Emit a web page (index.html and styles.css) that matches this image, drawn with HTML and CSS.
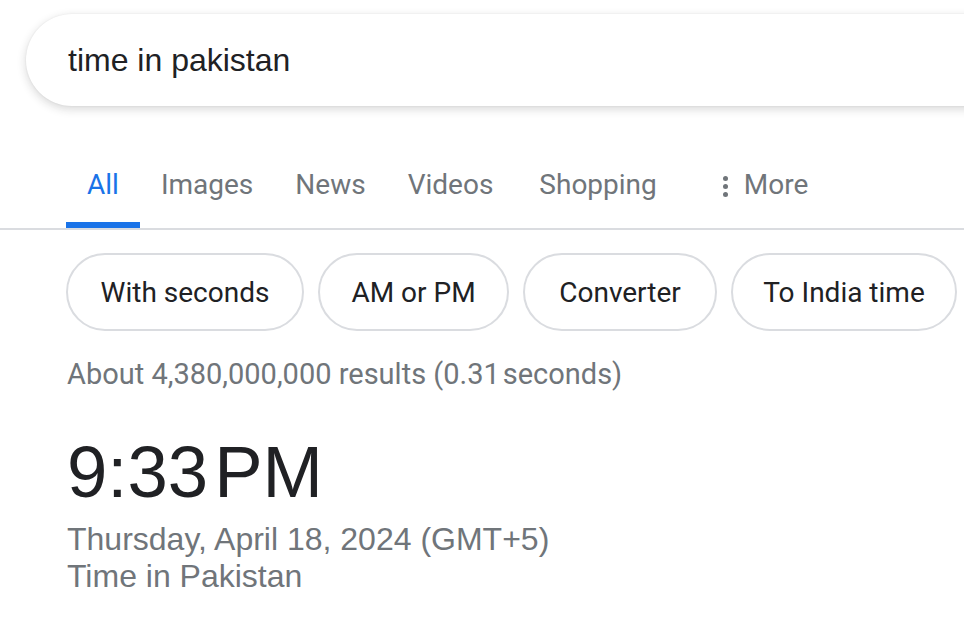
FILE: index.html
```html
<!DOCTYPE html>
<html>
<head>
<meta charset="utf-8">
<link rel="stylesheet" href="styles.css">
</head>
<body>
<div class="page">
  <div class="search-wrap">
    <div class="search">time in pakistan</div>
  </div>
  <nav class="tabs">
    <div class="tab active">All</div>
    <div class="tab">Images</div>
    <div class="tab">News</div>
    <div class="tab">Videos</div>
    <div class="tab shop">Shopping</div>
    <div class="tab more"><span class="dots"><i></i><i></i><i></i></span>More</div>
  </nav>
  <div class="chips">
    <div class="chip c1">With seconds</div>
    <div class="chip c2">AM or PM</div>
    <div class="chip c3">Converter</div>
    <div class="chip c4">To India time</div>
  </div>
  <div class="stats">About 4,380,000,000 results (0.31&#8202;seconds)</div>
  <div class="clock">
    <div class="time">9:33&#8202;PM</div>
    <div class="date">Thursday, April 18, 2024 (GMT+5)</div>
    <div class="place">Time in Pakistan</div>
  </div>
</div>
</body>
</html>
```
FILE: styles.css
```css
html, body {
  margin: 0;
  padding: 0;
  background: #fff;
  overflow: hidden;
}
.page {
  width: 964px;
  height: 620px;
  overflow: hidden;
  font-family: "Liberation Sans", Arial, sans-serif;
  color: #202124;
}
.search-wrap {
  padding: 14px 0 0 26px;
}
.search {
  height: 92px;
  width: 1000px;
  border-radius: 46px;
  background: #fff;
  box-shadow: 0 3px 10px rgba(32, 33, 36, 0.18), 0 0 2px rgba(32,33,36,0.08);
  box-sizing: border-box;
  padding-left: 42px;
  display: flex;
  align-items: center;
  font-size: 32px;
  color: #202124;
}
.tabs {
  margin-top: 54px;
  display: flex;
  height: 68px;
  border-bottom: 2px solid #dadce0;
  padding-left: 66px;
  font-family: Roboto, "Open Sans", sans-serif;
  font-size: 28px;
  color: #70757a;
}
.tab {
  position: relative;
  padding: 0 21px;
  line-height: 50px;
}
.tab.active {
  color: #1a73e8;
}
.tab.active::after {
  content: "";
  position: absolute;
  left: 0;
  right: 0;
  bottom: 0;
  height: 6px;
  background: #1a73e8;
}
.tab.shop {
  margin-left: 4px;
}
.tab.more {
  margin-left: 24px;
  display: flex;
  align-items: center;
  height: 50px;
}
.dots {
  display: flex;
  flex-direction: column;
  gap: 3px;
  margin-right: 16px;
  margin-top: 2px;
}
.dots i {
  display: block;
  width: 5px;
  height: 5px;
  border-radius: 50%;
  background: #70757a;
}
.chips {
  display: flex;
  gap: 14px;
  padding: 23px 0 0 66px;
  font-family: Roboto, "Open Sans", sans-serif;
  font-size: 28px;
  color: #202124;
}
.chip {
  height: 78px;
  box-sizing: border-box;
  border: 2px solid #dadce0;
  border-radius: 39px;
  display: flex;
  align-items: center;
  justify-content: center;
  flex: none;
}
.c1 { width: 238px; }
.c2 { width: 191px; }
.c3 { width: 194px; }
.c4 { width: 226px; }
.stats {
  padding: 27px 0 0 67px;
  font-family: Roboto, "Open Sans", sans-serif;
  font-size: 29px;
  color: #70757a;
  line-height: 32px;
}
.clock {
  padding: 42px 0 0 67px;
}
.time {
  font-size: 72.5px;
  line-height: 80px;
  color: #202124;
}
.date, .place {
  font-size: 32px;
  line-height: 37px;
  color: #70757a;
}
.date {
  margin-top: 9px;
}
```
